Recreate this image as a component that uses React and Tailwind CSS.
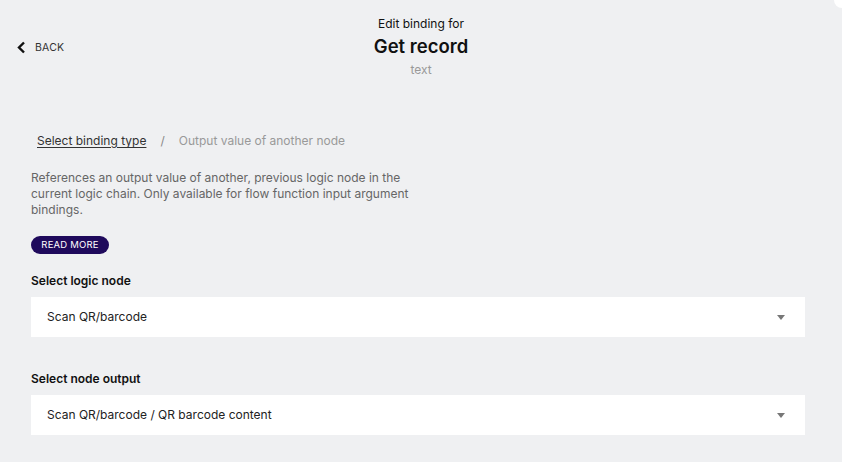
function SelectBox({ value }) {
  return (
    <div className="flex h-10 w-[774px] items-center justify-between bg-white pl-4 pr-[20px]">
      <span className="text-[12px] text-[#222]">{value}</span>
      <span className="h-0 w-0 border-x-[4.5px] border-t-[5px] border-x-transparent border-t-[#777]" />
    </div>
  );
}

export default function App() {
  return (
    <div className="relative h-[462px] w-[842px] overflow-hidden bg-[#eff0f2] font-['Inter','Liberation_Sans',sans-serif]">
      <div className="absolute right-0 top-0 h-2 w-2 rounded-bl-full bg-white" />

      <header className="relative h-[92px]">
        <button className="absolute left-[17px] top-[40px] flex items-center gap-[9px] text-[#333]">
          <svg width="9" height="13" viewBox="0 0 9 13" fill="none">
            <path d="M7 1.5 L2 6.5 L7 11.5" stroke="#111" strokeWidth="2.4" />
          </svg>
          <span className="text-[10.5px] tracking-[0.02em]">BACK</span>
        </button>
        <div className="flex flex-col items-center pt-[16px]">
          <p className="text-[12px] leading-[16px] text-[#111]">Edit binding for</p>
          <h1 className="mt-[2px] text-[18.5px] font-semibold leading-[24px] text-[#111]">Get record</h1>
          <p className="mt-[4px] text-[12px] leading-[16px] text-[#999]">text</p>
        </div>
      </header>

      <main className="px-[31px]">
        <nav className="mt-[40px] flex items-center pl-[6px] text-[12px] leading-[18px]">
          <span className="text-[#333] underline underline-offset-2">Select binding type</span>
          <span className="ml-[14px] text-[#888]">/</span>
          <span className="ml-[14px] text-[#999]">Output value of another node</span>
        </nav>

        <p className="mt-[20px] w-[385px] text-[12px] leading-[16px] text-[#666]">
          References an output value of another, previous logic node in the current logic chain. Only available for
          flow function input argument bindings.
        </p>

        <button className="mt-[18px] flex h-[18px] w-[78px] items-center justify-center rounded-full bg-[#1f0a5c] text-[9.5px] tracking-[0.02em] text-white">
          READ MORE
        </button>

        <label className="mt-[19px] block text-[12px] font-semibold leading-[16px] text-[#111]">Select logic node</label>
        <div className="mt-[8px]">
          <SelectBox value="Scan QR/barcode" />
        </div>

        <label className="mt-[34px] block text-[12px] font-semibold leading-[16px] text-[#111]">Select node output</label>
        <div className="mt-[8px]">
          <SelectBox value="Scan QR/barcode / QR barcode content" />
        </div>
      </main>
    </div>
  );
}
